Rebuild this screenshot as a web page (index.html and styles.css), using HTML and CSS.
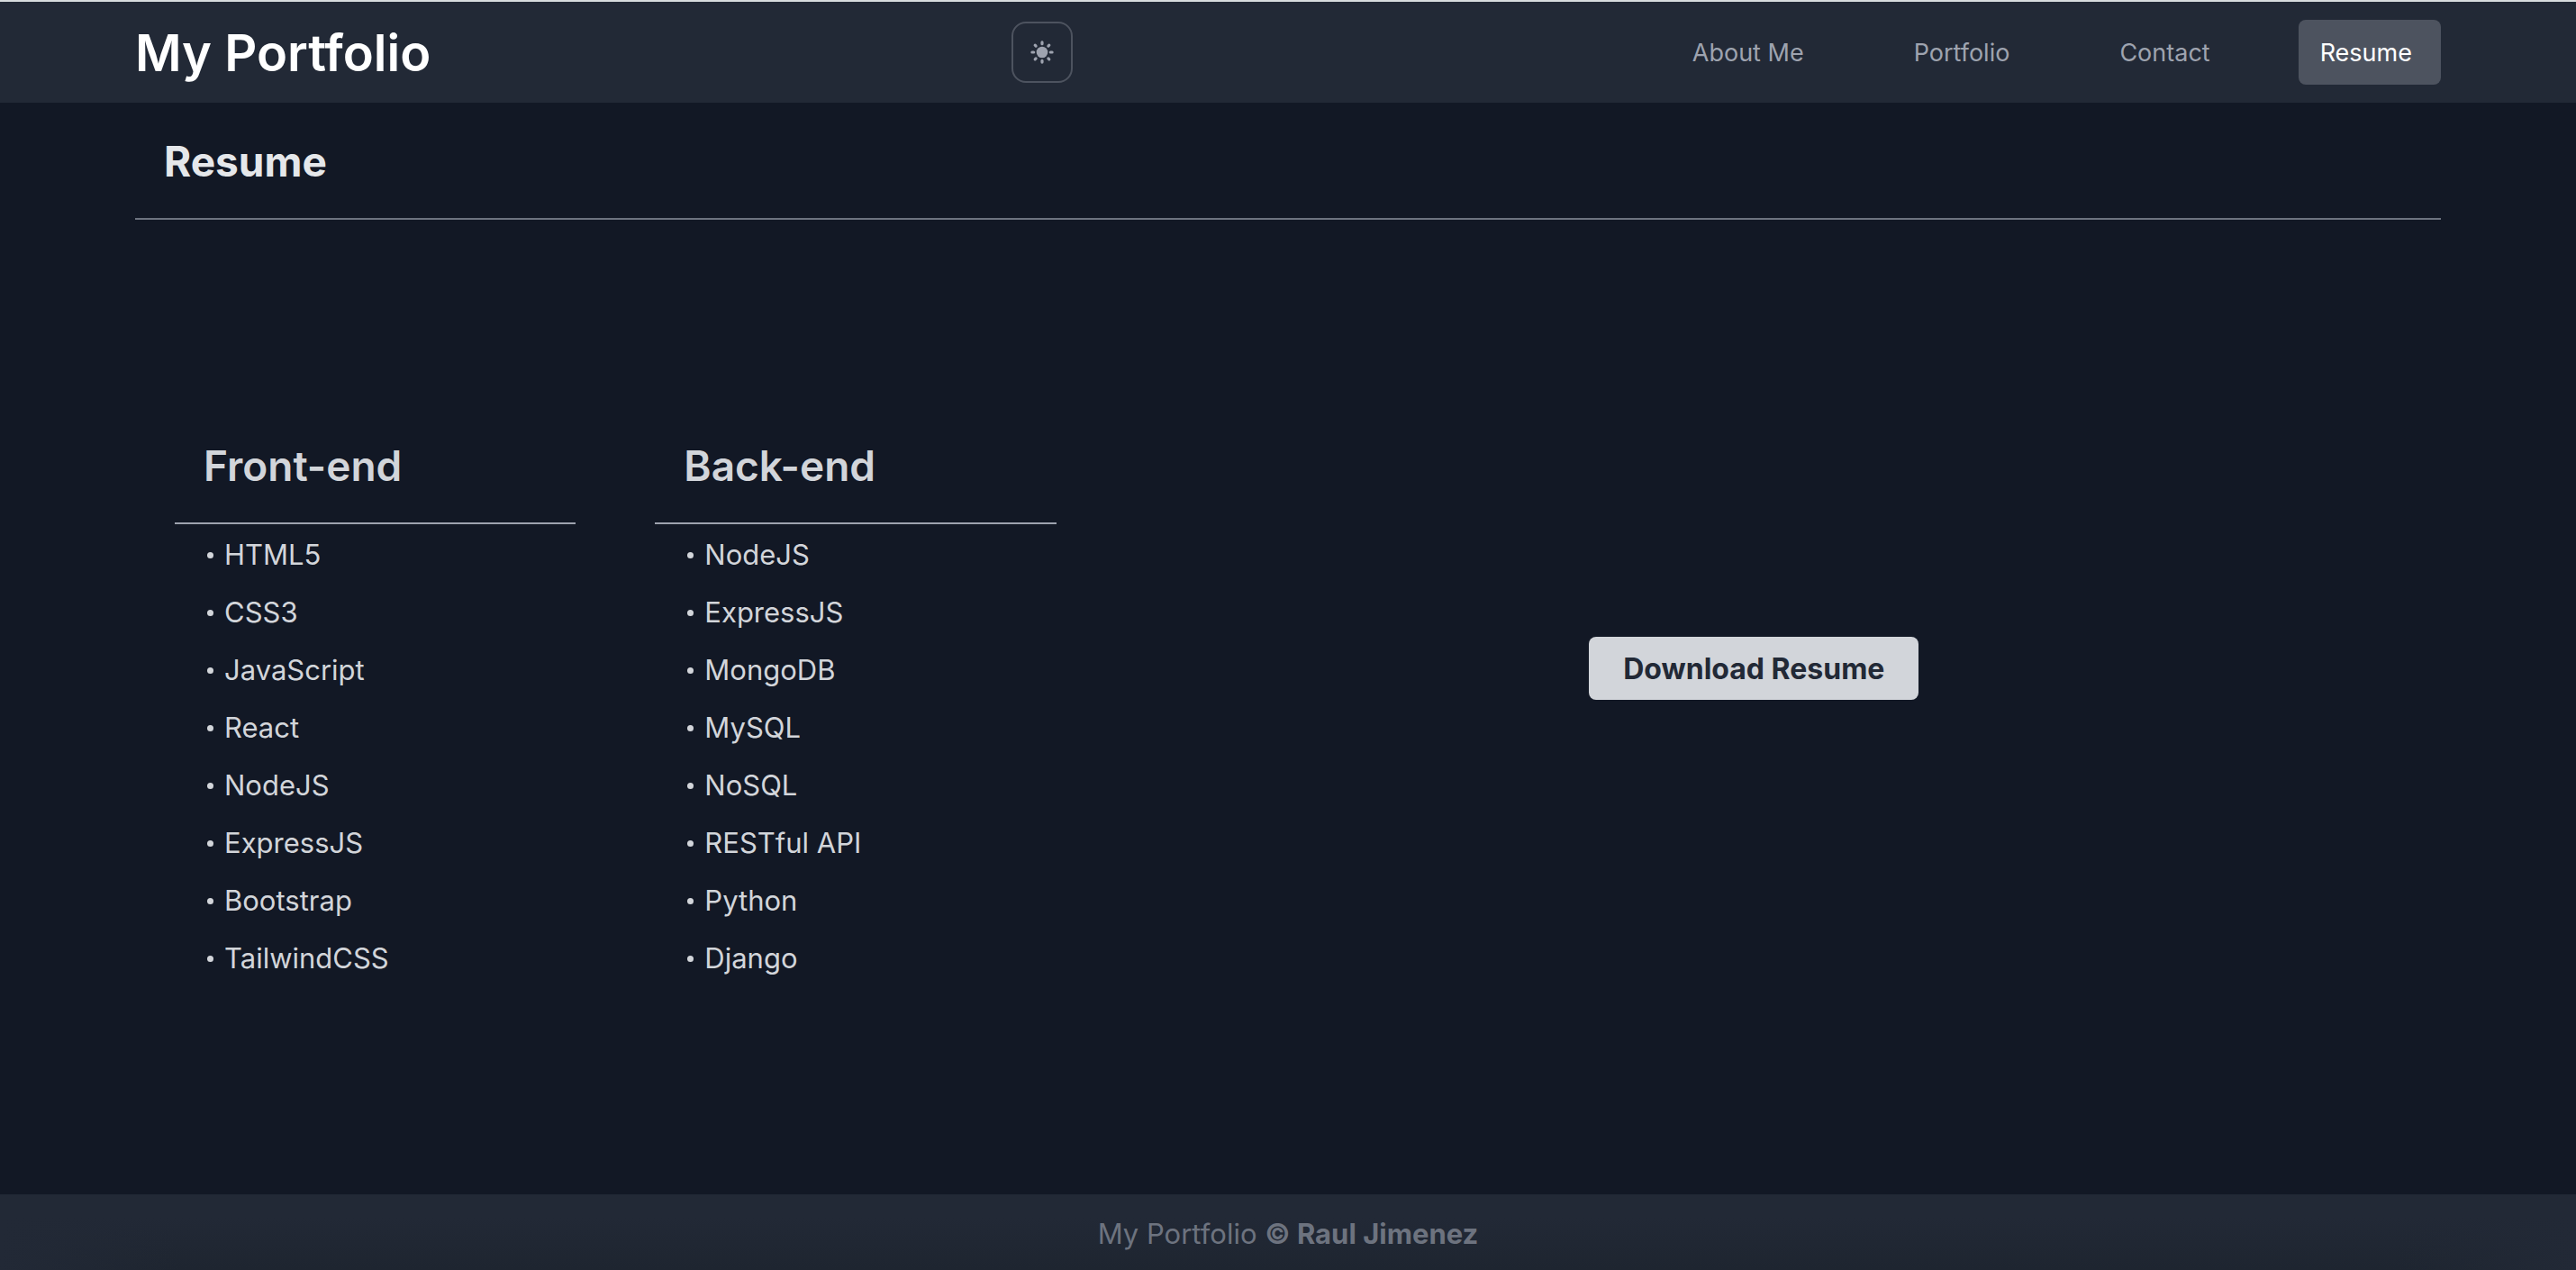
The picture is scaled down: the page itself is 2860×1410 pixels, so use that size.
FILE: index.html
```html
<!DOCTYPE html>
<html lang="en">
<head>
<meta charset="utf-8">
<meta name="viewport" content="width=device-width, initial-scale=1">
<title>My Portfolio</title>
<link rel="stylesheet" href="styles.css">
</head>
<body>
<header class="site-header">
  <div class="container site-header-row">
    <a class="brand" href="#">My Portfolio</a>
    <button class="theme-toggle" type="button" aria-label="Toggle theme">
      <svg class="sun" viewBox="0 0 28 28" aria-hidden="true">
        <circle cx="14" cy="14" r="6.3" fill="currentColor"/>
        <g stroke="currentColor" stroke-width="3.2" stroke-linecap="round">
          <path d="M14 2.9v1.8M14 23.3v1.8M2.9 14h1.8M23.3 14h1.8M6.2 6.2l.9.9M20.9 20.9l.9.9M6.2 21.8l.9-.9M20.9 7.1l.9-.9"/>
        </g>
      </svg>
    </button>
    <nav class="site-nav">
      <a class="nav-link" href="#about">About Me</a>
      <a class="nav-link" href="#portfolio">Portfolio</a>
      <a class="nav-link" href="#contact">Contact</a>
      <a class="nav-link nav-link-active" href="#resume" aria-current="page">Resume</a>
    </nav>
  </div>
</header>
<main class="container page">
  <h1 class="page-title">Resume</h1>
  <div class="content">
    <div class="skills">
      <section class="skill-group">
        <h2 class="skill-title">Front-end</h2>
        <ul class="skill-list">
          <li>HTML5</li>
          <li>CSS3</li>
          <li>JavaScript</li>
          <li>React</li>
          <li>NodeJS</li>
          <li>ExpressJS</li>
          <li>Bootstrap</li>
          <li>TailwindCSS</li>
        </ul>
      </section>
      <section class="skill-group">
        <h2 class="skill-title">Back-end</h2>
        <ul class="skill-list">
          <li>NodeJS</li>
          <li>ExpressJS</li>
          <li>MongoDB</li>
          <li>MySQL</li>
          <li>NoSQL</li>
          <li>RESTful API</li>
          <li>Python</li>
          <li>Django</li>
        </ul>
      </section>
    </div>
    <div class="download">
      <button class="download-button" type="button">Download Resume</button>
    </div>
  </div>
</main>
<footer class="site-footer">
  <p class="copyright">My Portfolio <strong>© Raul Jimenez</strong></p>
</footer>
</body>
</html>
```

FILE: styles.css
```css
* {
  box-sizing: border-box;
  margin: 0;
}

body {
  display: flex;
  flex-direction: column;
  min-height: 100vh;
  background: #121825;
  color: #d2d5da;
  font-family: Inter, "Liberation Sans", sans-serif;
  font-size: 31px;
  line-height: 48px;
}

a {
  color: inherit;
  text-decoration: none;
}

.container {
  width: 100%;
  max-width: 2860px;
  margin: 0 auto;
  padding: 0 150px;
}

/* Header */

.site-header {
  border-top: 2px solid #d8dcde;
  background: #222936;
}

.site-header-row {
  display: flex;
  align-items: center;
  justify-content: space-between;
  min-height: 112px;
}

.brand {
  padding-top: 2px;
  color: #fff;
  font-size: 56px;
  font-weight: 600;
  line-height: 80px;
}

.theme-toggle {
  display: flex;
  align-items: center;
  justify-content: center;
  width: 68px;
  height: 68px;
  padding: 0;
  border: 2px solid #4d535f;
  border-radius: 16px;
  background: none;
  color: #9ea3af;
}

.sun {
  width: 28px;
  height: 28px;
}

.site-nav {
  display: flex;
  gap: 66px;
  padding-left: 20px;
}

.nav-link {
  padding: 17px 32px 15px 24px;
  border-radius: 8px;
  color: #9ea3af;
  font-size: 27px;
  line-height: 40px;
}

.nav-link-active {
  background: #4d535f;
  color: #fff;
}

/* Page */

.page {
  display: flex;
  flex: 1;
  flex-direction: column;
}

.page-title,
.skill-title {
  padding: 33px 32px 31px;
  font-size: 46px;
  line-height: 64px;
}

.page-title {
  border-bottom: 2px solid #6d737f;
  color: #e5e7ea;
  font-weight: 700;
}

.skill-title {
  border-bottom: 2px solid #9ea3af;
  font-weight: 600;
}

.content {
  display: grid;
  flex: 1;
  grid-template-columns: 5fr 7fr;
  align-items: center;
  padding-bottom: 22px;
}

.skills {
  display: grid;
  grid-template-columns: 1fr 1fr;
  gap: 88px;
  padding: 0 44px;
}

.skill-list {
  padding: 2px 0 0 36px;
  line-height: 64px;
  list-style: none;
}

.skill-list li {
  display: flex;
  align-items: center;
  gap: 12px;
}

.skill-list li::before {
  content: "";
  width: 7px;
  height: 7px;
  border-radius: 50%;
  background: currentColor;
}

.download {
  display: flex;
  justify-content: center;
  padding: 0 32px 64px 0;
}

.download-button {
  padding: 11px 38px 9px;
  border: 0;
  border-radius: 8px;
  background: #d2d5da;
  color: #222936;
  font: inherit;
  font-size: 32px;
  font-weight: 700;
  line-height: 50px;
}

/* Footer */

.site-footer {
  padding: 20px 32px 16px;
  background:
    linear-gradient(to right, #222936, transparent 200px, transparent calc(100% - 200px), #222936),
    linear-gradient(#222936 30%, #1e2530);
  color: #6d737f;
  text-align: center;
}
```
